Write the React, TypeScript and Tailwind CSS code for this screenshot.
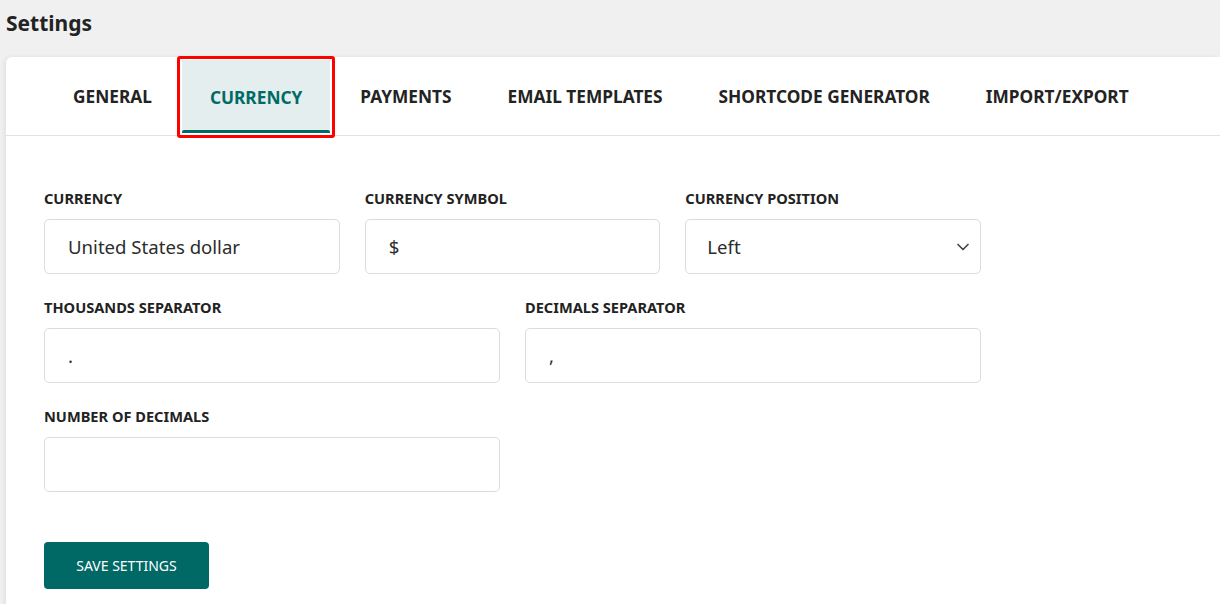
import { ChevronDown } from "lucide-react";

const tabs = ["General", "Currency", "Payments", "Email Templates", "Shortcode Generator", "Import/Export"];

const Field = ({ label, value, span }: { label: string; value: string; span: string }) => (
  <div className={`${span} flex flex-col`}>
    <label className="mb-[11px] text-[14.6px] leading-5 font-bold uppercase text-[#222]">{label}</label>
    <div className="flex h-[55px] items-center rounded-[5px] border border-[#dcdcdc] bg-white px-[23px] text-[18.6px] text-[#2c2c2c]">
      {value}
    </div>
  </div>
);

export default function App() {
  return (
    <div className="min-h-screen overflow-hidden bg-[#f0f0f0] font-['Noto_Sans',sans-serif]">
      <h1 className="px-[6px] pt-[9px] text-[21px] leading-7 font-bold text-[#232323]">Settings</h1>

      <div className="ml-[6px] mt-[20px] min-h-[560px] rounded-tl-[6px] bg-white shadow-[-2px_0_4px_rgba(0,0,0,0.06)]">
        {/* Tabs */}
        <div className="flex h-[79px] border-b border-[#e2e2e2] pl-[39px]">
          {tabs.map((tab) => {
            const active = tab === "Currency";
            return (
              <div
                key={tab}
                className={`relative flex items-center px-[28px] pt-[2px] text-[17.3px] font-bold uppercase ${
                  active ? "mx-[2px] mt-[3px] mb-[2px] bg-[#e4eeee] text-[#006b66]" : "text-[#232323]"
                }`}
              >
                {tab}
                {active && (
                  <>
                    <span className="absolute bottom-0 left-0 right-0 h-[3px] rounded-t-[2px] bg-[#006b66]" />
                    <span className="pointer-events-none absolute -top-[4px] -bottom-[5px] -left-[5px] -right-[5px] rounded-[3px] border-[3px] border-[#ff0000]" />
                  </>
                )}
              </div>
            );
          })}
        </div>

        {/* Form */}
        <div className="pl-[38px] pt-[52px] pb-[20px]">
          <div className="grid w-[937px] grid-cols-6 gap-x-[25px] gap-y-[23px]">
            <Field span="col-span-2" label="Currency" value="United States dollar" />
            <Field span="col-span-2" label="Currency Symbol" value="$" />
            <div className="col-span-2 flex flex-col">
              <label className="mb-[11px] text-[14.6px] leading-5 font-bold uppercase text-[#222]">Currency Position</label>
              <div className="flex h-[55px] items-center justify-between rounded-[5px] border border-[#dcdcdc] bg-white pl-[21px] pr-[7px] text-[18.6px] text-[#2c2c2c]">
                Left
                <ChevronDown className="h-[20px] w-[20px] text-[#444]" strokeWidth={2} />
              </div>
            </div>
            <Field span="col-span-3" label="Thousands Separator" value="." />
            <Field span="col-span-3" label="Decimals Separator" value="," />
            <Field span="col-span-3" label="Number of Decimals" value="" />
          </div>

          <button className="mt-[50px] h-[47px] w-[165px] rounded-[4px] bg-[#006865] text-[14px] uppercase text-white">
            Save Settings
          </button>
        </div>
      </div>
    </div>
  );
}
